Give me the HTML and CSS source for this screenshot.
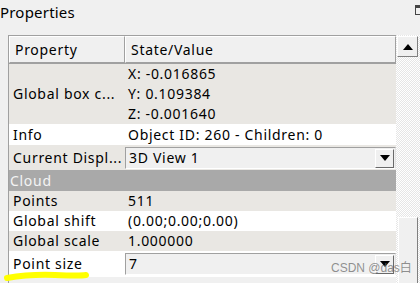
FILE: index.html
```html
<!DOCTYPE html>
<html>
<head>
<meta charset="utf-8">
<link rel="stylesheet" href="styles.css">
</head>
<body>
<div class="dock">
  <div class="title">Properties</div>
  <svg class="float-icon" width="8" height="11" viewBox="0 0 8 11"><rect x="0.5" y="0.5" width="8" height="9" fill="none" stroke="#444" stroke-width="1"/><rect x="0" y="0" width="9" height="3" fill="#444"/></svg>
  <div class="panel">
    <div class="table">
      <div class="head">
        <div class="hcell first">Property</div>
        <div class="hcell">State/Value</div>
      </div>
      <div class="row alt tall">
        <div class="k">Global box c...</div>
        <div class="v lines"><div>X: -0.016865</div><div>Y: 0.109384</div><div>Z: -0.001640</div></div>
      </div>
      <div class="row info">
        <div class="k">Info</div>
        <div class="v">Object ID: 260 - Children: 0</div>
      </div>
      <div class="row alt combo-row">
        <div class="k">Current Displ...</div>
        <div class="combo"><span>3D View 1</span><span class="drop"><span class="tri"></span></span></div>
      </div>
      <div class="row section">
        <div class="k">Cloud</div>
      </div>
      <div class="row alt">
        <div class="k">Points</div>
        <div class="v">511</div>
      </div>
      <div class="row">
        <div class="k">Global shift</div>
        <div class="v">(0.00;0.00;0.00)</div>
      </div>
      <div class="row alt">
        <div class="k">Global scale</div>
        <div class="v">1.000000</div>
      </div>
      <div class="row combo-row last">
        <div class="k">Point size</div>
        <div class="combo"><span>7</span><span class="drop"><span class="tri"></span></span></div>
      </div>
    </div>
    <div class="scrollbar">
      <div class="arrow"><span class="up"></span></div>
      <div class="track"></div>
      <div class="thumb"></div>
    </div>
  </div>
</div>
<svg class="scribble" width="100" height="14" viewBox="0 0 100 14"><path d="M7 9 Q30 5 55 6 T86 6" fill="none" stroke="#ffff00" stroke-width="6" stroke-linecap="round"/></svg>
<div class="watermark">CSDN @das白</div>
</body>
</html>
```
FILE: styles.css
```css
html, body {
  margin: 0;
  padding: 0;
}
body {
  width: 420px;
  height: 283px;
  overflow: hidden;
  background: #f0f0f0;
  font-family: "Noto Sans", "Noto Sans CJK SC", sans-serif;
  font-size: 14px;
  color: #000;
  position: relative;
}
.dock {
  position: relative;
}
.title {
  height: 35px;
  line-height: 24px;
  font-size: 15px;
  letter-spacing: 0.2px;
}
.float-icon {
  position: absolute;
  right: -3px;
  top: 5px;
}
.panel {
  display: flex;
  margin-left: 8px;
  height: 248px;
}
.table {
  width: 387px;
  border-left: 1px solid #a0a0a0;
  border-top: 1px solid #a0a0a0;
  display: flex;
  flex-direction: column;
  letter-spacing: 0.7px;
}
.head {
  display: grid;
  grid-template-columns: 116px 1fr;
  height: 27px;
  border-bottom: 1px solid #a0a0a0;
  background: #f0f0f0;
}
.hcell {
  border-left: 1px solid #fff;
  border-top: 1px solid #fff;
  border-right: 1px solid #a0a0a0;
  border-bottom: 1px solid #a0a0a0;
  padding-left: 5px;
  line-height: 25px;
}
.row {
  display: grid;
  grid-template-columns: 116px 1fr;
  height: 20px;
  line-height: 20px;
  background: #fff;
}
.row.alt {
  background: #e9e7e3;
}
.row.tall {
  height: 60px;
}
.row.info {
  height: 21px;
  line-height: 21px;
}
.k {
  padding-left: 4px;
  white-space: nowrap;
  overflow: hidden;
}
.v {
  padding-left: 3px;
  white-space: nowrap;
}
.lines {
  display: flex;
  flex-direction: column;
}
.tall .k {
  line-height: 60px;
}
.row.section {
  height: 21px;
  line-height: 21px;
  background: #a9a9a9;
  color: #f4f4f4;
}
.row.section .k {
  padding-left: 1px;
}
.combo-row {
  height: 25px;
  line-height: 25px;
}
.combo-row.last {
  height: 26px;
  background: #fff;
}
.combo {
  margin: 2px 0 0 0;
  height: 20px;
  border-top: 1px solid #a0a0a0;
  border-left: 1px solid #a0a0a0;
  border-right: 1px solid #e3e3e3;
  border-bottom: 1px solid #fff;
  background: #f0f0f0;
  display: flex;
  justify-content: space-between;
  align-items: center;
  padding-left: 3px;
  line-height: 20px;
}
.drop {
  width: 17px;
  height: 17px;
  margin-right: 1px;
  border-top: 1px solid #fff;
  border-left: 1px solid #fff;
  border-right: 1px solid #696969;
  border-bottom: 1px solid #696969;
  background: #f0f0f0;
  display: flex;
  align-items: center;
  justify-content: center;
}
.tri {
  width: 0;
  height: 0;
  border-left: 5px solid transparent;
  border-right: 5px solid transparent;
  border-top: 6px solid #000;
}
.scrollbar {
  width: 24px;
  display: flex;
  flex-direction: column;
  position: relative;
  overflow: hidden;
  background: repeating-conic-gradient(#ffffff 0 25%, #e6e6e6 0 50%) 0 0 / 2px 2px;
}
.arrow {
  margin: 1px 0 0 1px;
  width: 19px;
  height: 19px;
  border-top: 1px solid #fff;
  border-left: 1px solid #fff;
  border-right: 1px solid #808080;
  border-bottom: 1px solid #808080;
  background: #f0f0f0;
  display: flex;
  align-items: center;
  justify-content: center;
}
.up {
  width: 0;
  height: 0;
  border-left: 5px solid transparent;
  border-right: 5px solid transparent;
  border-bottom: 6px solid #000;
}
.track {
  flex: 1;
}
.thumb {
  position: absolute;
  left: 2px;
  top: 182px;
  width: 18px;
  height: 65px;
  background: #f0f0f0;
  border-left: 1px solid #fff;
  border-top: 1px solid #fff;
  border-right: 1px solid #808080;
}
.scribble {
  position: absolute;
  left: 0;
  top: 269px;
}
.watermark {
  position: absolute;
  left: 331px;
  top: 258px;
  font-family: "Liberation Sans", "Noto Sans CJK SC", sans-serif;
  font-size: 12px;
  color: rgba(110, 110, 110, 0.75);
}
```
